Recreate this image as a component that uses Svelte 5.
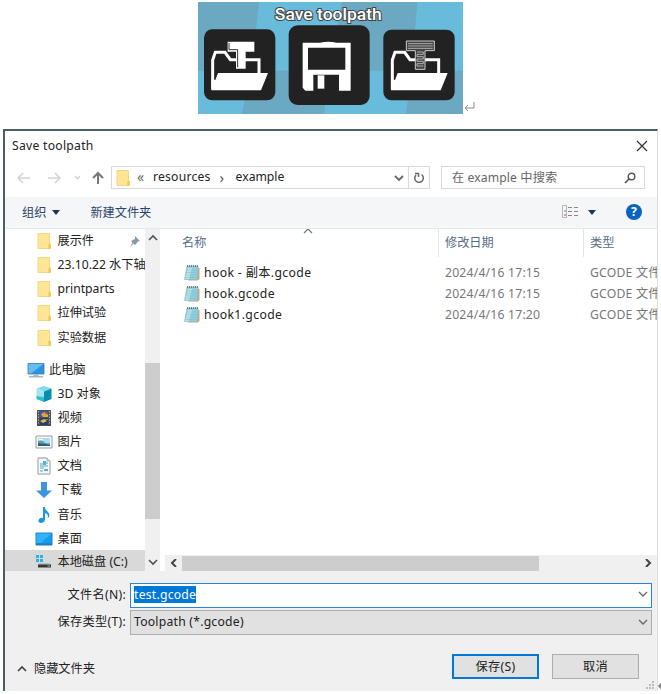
<script>
  const folders = ['展示件', '23.10.22 水下轴', 'printparts', '拉伸试验', '实验数据'];
  const places = [
    ['cube', '3D 对象'], ['film', '视频'], ['image', '图片'], ['doc', '文档'],
    ['down', '下载'], ['note', '音乐'], ['desk', '桌面'], ['disk', '本地磁盘 (C:)']
  ];
  const files = [
    ['hook - 副本.gcode', '2024/4/16 17:15'],
    ['hook.gcode', '2024/4/16 17:15'],
    ['hook1.gcode', '2024/4/16 17:20']
  ];
  const chevrons = { up: 'M1 6L5 2L9 6', down: 'M1 2L5 6L9 2', left: 'M7 0L3 4L7 8', right: 'M3 0L7 4L3 8' };
</script>

{#snippet chev(dir, color = '#505050', w = 1.6)}
  <svg width="10" height="8" viewBox="0 0 10 8"><path d={chevrons[dir]} fill="none" stroke={color} stroke-width={w} /></svg>
{/snippet}

{#snippet icon(kind)}
  <svg width="18" height="18" viewBox="0 0 18 18">
    {#if kind === 'folder'}
      <path d="M3 1.500H14.500V12L15.500 13V16.500H3Z" fill="#ffe594" stroke="#efcf72" stroke-width=".8" />
      <path d="M13.500 12.500Q15.500 10 15.700 13V16.600H13.200Z" fill="#f3c94d" />
    {:else if kind === 'pc'}
      <path d="M1 2.500H17V13H1Z" fill="#2c93dc" stroke="#397ca9" stroke-width=".8" />
      <path d="M1.500 3H16.500L4 12.500H1.500Z" fill="#65bdf1" />
      <path d="M6.500 13.400H11.500V15H6.500ZM2 15H16V16.500H2Z" fill="#a5b8c3" />
    {:else if kind === 'cube'}
      <path d="M9 1L16.500 3.500L9 6.500L1.500 3.500Z" fill="#7fdcea" />
      <path d="M1.500 3.500L9 6.500V17L1.500 14Z" fill="#a5e5ef" />
      <path d="M9 6.500L16.500 3.500V14L9 17Z" fill="#078eac" />
      <path d="M1.500 11L9 12V17L1.500 14Z" fill="#30bed5" />
    {:else if kind === 'film'}
      <path d="M2 1H16V17H2Z" fill="#4a4d52" />
      <path d="M5 2H13V8H5Z" fill="#345da5" /><path d="M5 9H13V16H5Z" fill="#283e6b" />
      <path d="M6 5L10 3L13 6V8H8Z" fill="#e6a833" /><path d="M5 12L9 10L12 12L8 14Z" fill="#e0b842" />
      <path d="M10 3H12V5H10Z" fill="#cc4738" /><path d="M10 10H13V11H10Z" fill="#4a9953" />
      <path d="M3.500 2V16M14.500 2V16" stroke="#aaaeb1" stroke-width="1.200" stroke-dasharray="1.400 1.400" />
    {:else if kind === 'image'}
      <path d="M1 3H17V15H1Z" fill="#fbfbfb" stroke="#969b9f" />
      <path d="M3 5H15V13H3Z" fill="#aadcf1" /><path d="M3 8Q7 7 9 9T15 10V13H3Z" fill="#5f9f9b" />
      <path d="M3 10.500Q9 10 15 12V13H3Z" fill="#285b86" /><path d="M4 6H8V7H4Z" fill="#fff" />
    {:else if kind === 'doc'}
      <path d="M3 1H12L15 4V17H3Z" fill="#f7f9fa" stroke="#929aa0" />
      <path d="M12 1V4H15" fill="#dce1e5" stroke="#929aa0" stroke-width=".7" />
      <path d="M5 7H8M5 9H13M5 11H9M9 6H13M5 14H8" stroke="#55a3c4" /><path d="M8 4H11V8H8ZM9 12H13V14H9Z" fill="#54b1d6" />
    {:else if kind === 'down'}
      <path d="M6 1H12V9.500H17L9 17L1 9.500H6Z" fill="#3c93e0" />
    {:else if kind === 'note'}
      <path d="M8 1H10Q10 4 13 6Q16 9 12.500 12.500Q14 8 10 7V14Q9 17 5.500 17Q3 16.500 3.500 14Q5 11 8 12Z" fill="#1897e5" />
    {:else if kind === 'desk'}
      <path d="M1 3H17V15H1Z" fill="#159cf1" stroke="#237eb8" />
      <path d="M1.500 3.500H16.500L6 13H1.500Z" fill="#30b2fc" /><path d="M2 14H16" stroke="#1974b3" />
    {:else if kind === 'disk'}
      <path d="M1 2H4V5H1ZM5 2H8V5H5ZM1 6H4V9H1ZM5 6H8V9H5Z" fill="#24b4e7" />
      <path d="M4 10H14L16 12H3Z" fill="#b7bdc0" /><path d="M3 11.500H16V14.500H3Z" fill="#34383b" /><path d="M12.500 12.500H15V13.500H12.500Z" fill="#5fe45b" />
    {:else if kind === 'file'}
      <path d="M14 3L16.500 4V15L15 16.500H5Z" fill="#b9ac8d" />
      <path d="M4 2H15L14 15.500H1.500Z" fill="#8fcedc" stroke="#9ab9c0" stroke-width=".7" />
      <path d="M5 4H9L6 15H2Z" fill="#c4e7ed" opacity=".8" />
      <path d="M3.500 6H14M3 8.500H13.800M2.500 11H13.500M2 13.500H13" stroke="#74b9c8" stroke-width=".4" />
      <path d="M4 2H15" stroke="#53666c" stroke-width="1.300" stroke-dasharray="1 1" />
    {/if}
  </svg>
{/snippet}

<div class="page">
  <div class="top">
    <svg class="banner" width="265" height="112" viewBox="24 6 795 336">
      <path d="M24 6H819V342H24Z" fill="#69bbdb" />
      <path d="M24 6H207L185 212H24ZM455 6H682L665 212H420ZM185 212H420L402 342H155ZM665 212H819V342H648Z" fill="#6aa9c1" />
      <rect x="42" y="88" width="214" height="213" rx="25" fill="#222" />
      <rect x="296" y="76" width="243" height="239" rx="27" fill="#222" />
      <rect x="580" y="89" width="214" height="212" rx="25" fill="#222" />
      {#each [0, 539] as dx}
        <g transform="translate({dx} 0)">
          <path d="M68 267V180L76 157H105L121 179H207V219" fill="none" stroke="#fff" stroke-width="9" />
          <path d="M64 271V237L76 240L84 219H234L213 271Z" fill="#fff" />
        </g>
      {/each}
      <path d="M113 125H193V155H167V206H138V155H113Z" fill="#fff" />
      <path d="M117 129V149H143V202" fill="none" stroke="#333" stroke-width="3" />
      <path d="M649 123H733V152H705V208H676V152H649Z" fill="#444" stroke="#ccc" stroke-width="3" />
      <path d="M654 131H728M654 138H728M654 145H728M681 156H700V163H681V170H700V177H681V184H700V191H681V198H700" fill="none" stroke="#c4c4c4" stroke-width="2.500" />
      <path fill-rule="evenodd" d="M338 128H390Q415 123 440 128H482V272H447V224H370V272H346L338 263ZM354 143V209H466V143Z" fill="#fff" />
      <path d="M383 226H403V266H383Z" fill="#fff" />
      <text x="415" y="61" text-anchor="middle" textLength="321" lengthAdjust="spacingAndGlyphs" class="banner-text">Save toolpath</text>
    </svg>
    <svg class="return" width="11" height="10" viewBox="0 0 11 10"><path d="M10 0V6H1M4 3L1 6L4 9" fill="none" stroke="#888" /></svg>
  </div>

  <div class="row-outer">
  <div class="dialog">
    <header><span class="title">Save toolpath</span>
      <svg width="12" height="12" viewBox="0 0 12 12"><path d="M1 1L11 11M11 1L1 11" stroke="#333" stroke-width="1.200" /></svg>
    </header>
    <div class="nav">
      <svg width="106" height="23" viewBox="0 0 106 23" fill="none">
        <path d="M13 12H25M18 7L13 12L18 17M43 12H55M50 7L55 12L50 17" stroke="#d4d4d4" stroke-width="1.500" />
        <path d="M70 10L72.500 13L75 10" stroke="#d0d0d0" stroke-width="1.400" />
        <path d="M93 18V7M88 12L93 7L98 12" stroke="#777" stroke-width="2" />
      </svg>
      <div class="address">
        {@render icon('folder')}
        <span class="quote">«</span><span class="res">resources</span><span class="sep">›</span><span>example</span>
        <span class="grow"></span>{@render chev('down', '#666', 1.8)}
        <span class="refresh"><svg width="12" height="12" viewBox="0 0 12 12" fill="none"><path d="M8.500 2.500A4.300 4.300 0 1 1 3 3M2 1.500H5.500V5" stroke="#666" stroke-width="1.500" /></svg></span>
      </div>
      <div class="search"><span>在 example 中搜索</span>
        <svg width="12" height="12" viewBox="0 0 12 12"><circle cx="7.500" cy="4.500" r="3.300" fill="none" stroke="#555" stroke-width="1.400" /><path d="M5 7L1 11" stroke="#555" stroke-width="1.700" /></svg>
      </div>
    </div>
    <div class="toolbar">
      <span>组织</span><i class="tri"></i><span class="newf">新建文件夹</span><span class="grow"></span>
      <svg width="17" height="13" viewBox="0 0 17 13"><path d="M.5.500H4.500V12.500H.5Z" fill="#f7f7f7" stroke="#b4b4b4" /><path d="M2 5H4V7H2Z" fill="#9ac1e4" /><path d="M2 9H4V11H2Z" fill="#e99b9b" /><path d="M6 2.500H10M12 2.500H16M6 6.500H10M12 6.500H16M6 10.500H10M12 10.500H16" stroke="#888" /></svg>
      <i class="tri view"></i><span class="help">?</span>
    </div>
    <div class="body">
      <aside>
        {#each folders as name, i}
          <div class="item">{@render icon('folder')}<span>{name}</span>
            {#if i === 0}<svg class="pin" width="10" height="11" viewBox="0 0 10 11"><path d="M5 0L10 5L8 5.500L6 8L5 9L3.500 7.500L0 11L2.500 6.500L1 5L5 3Z" fill="#8797a3" /></svg>{/if}
          </div>
        {/each}
        <div class="item pc">{@render icon('pc')}<span>此电脑</span></div>
        {#each places as [kind, name]}
          <div class="item" class:selected={kind === 'disk'}>{@render icon(kind)}<span>{name}</span></div>
        {/each}
      </aside>
      <div class="vbar"><div class="cap">{@render chev('up')}</div><div class="vthumb"></div><div class="cap">{@render chev('down')}</div></div>
      <main>
        <div class="sort">{@render chev('up', '#777', 1.2)}</div>
        <div class="cols head"><span>名称</span><span class="line">修改日期</span><span class="line">类型</span></div>
        <div class="files">
          {#each files as [name, date]}
            <div class="cols"><div class="file">{@render icon('file')}<span>{name}</span></div><span class="when">{date}</span><span class="type">GCODE 文件</span></div>
          {/each}
        </div>
        <div class="hbar">{@render chev('left', '#444', 2)}<div class="hthumb"></div><span class="grow"></span>{@render chev('right', '#444', 2)}</div>
      </main>
    </div>
    <footer>
      <div class="field"><label for="name">文件名(N):</label><div class="combo active" id="name"><mark>test.gcode</mark><span class="grow"></span>{@render chev('down', '#666', 1.3)}</div></div>
      <div class="field second"><label for="kind">保存类型(T):</label><div class="combo" id="kind"><span>Toolpath (*.gcode)</span><span class="grow"></span>{@render chev('down', '#666', 1.3)}</div></div>
      <div class="actions">{@render chev('up', '#444', 1.7)}<span class="hide">隐藏文件夹</span><span class="grow"></span><button class="primary">保存(S)</button><button>取消</button></div>
      <svg class="grip" width="9" height="9" viewBox="0 0 9 9"><path d="M6 0H8V2H6ZM3 3H5V5H3ZM6 3H8V5H6ZM0 6H2V8H0ZM3 6H5V8H3ZM6 6H8V8H6Z" fill="#bbb" /></svg>
    </footer>
  </div>
  <svg class="mark" width="4" height="8" viewBox="0 0 4 8"><path d="M0 4L3 1V7ZM2 4H4" fill="#888" stroke="#888" stroke-width=".5" /></svg>
  </div>
</div>

<style>
  :global(body) { background: #fff; overflow: hidden; }
  .page { width: 661px; height: 694px; overflow: hidden; box-sizing: border-box; padding-top: 2px; font: 12.2px/18px "Noto Sans", "Noto Sans CJK SC", sans-serif; color: #222; }
  .page * { box-sizing: border-box; }
  svg { display: block; flex: none; }
  span, label { white-space: nowrap; }
  .top { height: 127px; display: flex; padding-left: 198px; }
  .return { margin: 100px 0 0 1px; }
  .banner-text { font: 500 49px Roboto, sans-serif; fill: #fff; stroke: #444; stroke-width: 6px; paint-order: stroke; }
  .row-outer { display: flex; align-items: flex-end; padding-left: 3px; }
  .mark { margin-bottom: 1px; }
  .dialog { width: 655px; height: 562px; flex: none; border: 2px solid #465f69; border-right: 1px solid #deded5; border-bottom: 0; display: flex; flex-direction: column; overflow: hidden; }
  header { height: 29px; flex: none; display: flex; justify-content: space-between; align-items: center; padding: 0 9px 0 7px; }
  .title { letter-spacing: .25px; }
  .nav { height: 37px; flex: none; display: flex; padding-top: 6px; }
  .address { height: 23px; width: 319px; border: 1px solid #d9d9d9; display: flex; align-items: center; padding: 0 0 0 2px; }
  .address > span { margin-top: -1px; }
  .quote { margin-left: 5px; width: 16px; color: #666; font-size: 14px; }
  .res { letter-spacing: .2px; }
  .sep { margin-left: 9px; width: 16px; color: #555; font-size: 15px; }
  .grow { flex: 1; }
  .address .refresh { margin: 0 0 0 4px; height: 21px; width: 21px; border-left: 1px solid #d9d9d9; display: flex; align-items: center; justify-content: center; }
  .search { margin-left: 11px; width: 204px; height: 23px; border: 1px solid #d9d9d9; display: flex; align-items: center; justify-content: space-between; padding: 0 8px 0 10px; color: #666; letter-spacing: .1px; }
  .toolbar { height: 32px; flex: none; background: #f5f6f8; border-bottom: 1px solid #e6e8eb; display: flex; align-items: center; padding: 0 15px 0 17px; color: #29446b; }
  .tri { border: 4px solid transparent; border-top: 5px solid #17375f; border-bottom: 0; margin: -1px 0 0 6px; }
  .newf { margin-left: 30px; }
  .toolbar > svg { margin-top: -2px; }
  .tri.view { margin: -1px 30px 0 9px; }
  .help { width: 16px; height: 16px; border-radius: 50%; background: #0864c0; color: white; font-weight: 700; text-align: center; line-height: 16px; margin-top: -1px; }
  .body { height: 342px; flex: none; display: flex; }
  aside { width: 140px; overflow: hidden; }
  .item { height: 24.150px; display: flex; align-items: center; padding-left: 30px; }
  .item span { margin-left: 4.500px; }
  .pc { padding-left: 22px; margin-top: 8px; }
  .pc span { margin-left: 4px; }
  .item.selected { background: #d9d9d9; height: 22px; margin-top: -1px; padding-top: 3px; }
  .pin { margin-left: 36px; }
  .vbar { width: 15px; background: #f0f0f0; display: flex; flex-direction: column; }
  .cap { height: 18px; display: flex; align-items: center; justify-content: center; }
  .vthumb { height: 156px; margin: 116px 0 34px; background: #cdcdcd; }
  main { flex: 1; min-width: 0; padding-left: 5px; display: flex; flex-direction: column; overflow: hidden; }
  .sort { height: 5px; padding-left: 138px; margin-top: -2px; flex: none; }
  .cols { display: grid; grid-template-columns: 273px 145px 100px; height: 21.200px; align-items: center; color: #777; }
  .head { height: 23px; color: #5a6d87; margin-top: -4px; }
  .head span:first-child { padding-left: 17px; }
  .line { border-left: 1px solid #e5e5e5; padding-left: 6px; height: 29px; line-height: 29px; }
  .files { padding-top: 11px; flex: 1; }
  .file { display: flex; padding-left: 18px; color: #222; align-items: center; letter-spacing: .38px; }
  .file span { margin-left: 3px; }
  .when, .type { padding-left: 7px; letter-spacing: .2px; }
  .hbar { height: 16px; background: #f0f0f0; display: flex; align-items: center; padding: 0 4px; }
  .hthumb { width: 357px; height: 15px; background: #cdcdcd; margin-left: 3px; }
  footer { flex: 1; background: #f0f0f0; padding: 11px 5px 0 0; display: flex; flex-direction: column; }
  .field { display: flex; align-items: center; height: 26px; }
  .second { margin-top: 1px; }
  label { width: 121px; text-align: right; margin-right: 4px; letter-spacing: .3px; }
  .combo { flex: 1; height: 25px; border: 1px solid #adadad; background: #e1e1e1; display: flex; align-items: center; padding: 0 3px; letter-spacing: .23px; }
  .active { border-color: #2586db; background: #fff; padding-bottom: 2px; }
  mark { background: #0078d7; color: white; line-height: 17px; }
  .actions { display: flex; align-items: center; padding: 0 13px 0 12px; margin-top: 19px; }
  .actions > svg { margin-top: 5px; }
  .hide { margin: 5px 0 0 7px; }
  button { width: 87px; height: 25px; background: #e1e1e1; border: 1px solid #adadad; font: inherit; color: #222; padding: 0; margin-left: 13px; letter-spacing: .3px; }
  .primary { border: 2px solid #0078d7; }
  .grip { align-self: flex-end; margin: 2px -3px 0 0; }
</style>
